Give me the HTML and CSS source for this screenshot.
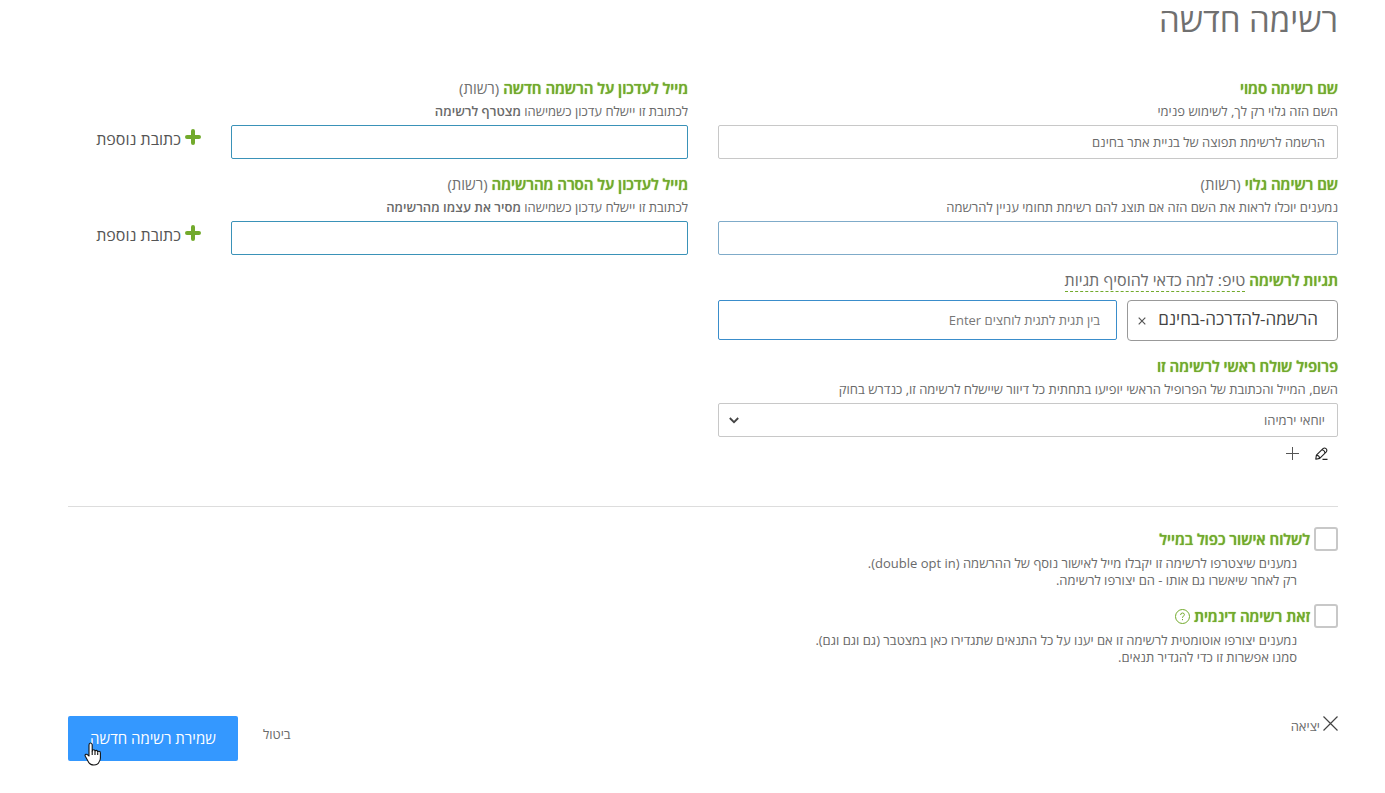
FILE: index.html
```html
<!DOCTYPE html>
<html lang="he" dir="rtl">
<head>
<meta charset="utf-8">
<title>רשימה חדשה</title>
<link rel="stylesheet" href="styles.css">
</head>
<body>
<main class="page">
  <h1 class="title">רשימה חדשה</h1>
  <form class="form">
    <div class="columns">
      <section class="column">
        <div class="field">
          <label class="label" for="hidden-name">שם רשימה סמוי</label>
          <p class="help">השם הזה גלוי רק לך, לשימוש פנימי</p>
          <input class="input" id="hidden-name" type="text" value="הרשמה לרשימת תפוצה של בניית אתר בחינם">
        </div>
        <div class="field">
          <label class="label" for="public-name">שם רשימה גלוי <span class="optional">(רשות)</span></label>
          <p class="help">נמענים יוכלו לראות את השם הזה אם תוצג להם רשימת תחומי עניין להרשמה</p>
          <input class="input input-soft" id="public-name" type="text">
        </div>
        <div class="field">
          <div class="label-row"><label class="label" for="tags">תגיות לרשימה</label> <a class="tip" href="#">טיפ: למה כדאי להוסיף תגיות</a></div>
          <div class="tags">
            <span class="tag">הרשמה-להדרכה-בחינם
              <button class="tag-remove" type="button" aria-label="הסרת תגית">
                <svg width="8" height="8" viewBox="0 0 8 8"><path d="M.7.7l6.6 6.6M7.3.7L.7 7.3" fill="none" stroke="#555" stroke-width="1.2"/></svg>
              </button>
            </span>
            <input class="input input-tag" id="tags" type="text" placeholder="בין תגית לתגית לוחצים Enter">
          </div>
        </div>
        <div class="field">
          <label class="label" for="profile">פרופיל שולח ראשי לרשימה זו</label>
          <p class="help">השם, המייל והכתובת של הפרופיל הראשי יופיעו בתחתית כל דיוור שיישלח לרשימה זו, כנדרש בחוק</p>
          <div class="select-wrap">
            <select class="input select" id="profile"><option>יוחאי ירמיהו</option></select>
            <svg class="chevron" width="10" height="7" viewBox="0 0 10 7"><path d="M.8 1L5 5.200 9.200 1" fill="none" stroke="#444" stroke-width="1.800"/></svg>
          </div>
          <div class="profile-actions">
            <button class="icon-button" type="button" aria-label="עריכת פרופיל">
              <svg width="13" height="13" viewBox="0 0 13 13" fill="none" stroke="#222" stroke-width="1.1" stroke-linejoin="round"><path d="M.8 12.200l.6-4L8 1.600Q9.500.3 11 1.600T11.300 4.800L4.700 11.400zM1.400 8.200Q4.500 8.400 4.700 11.400M7 2.800Q9.600 3.200 10 6M7.500 12.400H12.500"/></svg>
            </button>
            <button class="icon-button" type="button" aria-label="הוספת פרופיל">
              <svg width="13" height="13" viewBox="0 0 13 13"><path d="M6.5 0v13M0 6.5h13" fill="none" stroke="#555" stroke-width="1"/></svg>
            </button>
          </div>
        </div>
      </section>

      <section class="column">
        <div class="mail-row">
          <div class="field">
            <label class="label" for="mail-join">מייל לעדכון על הרשמה חדשה <span class="optional">(רשות)</span></label>
            <p class="help">לכתובת זו יישלח עדכון כשמישהו <b>מצטרף לרשימה</b></p>
            <input class="input input-active" id="mail-join" type="email">
          </div>
          <button class="add" type="button">
            <svg width="16" height="16" viewBox="0 0 16 16"><path d="M8 2v12M2 8h12" fill="none" stroke="#72aa2c" stroke-width="4" stroke-linecap="round"/></svg>
            <span>כתובת נוספת</span>
          </button>
        </div>
        <div class="mail-row">
          <div class="field">
            <label class="label" for="mail-leave">מייל לעדכון על הסרה מהרשימה <span class="optional">(רשות)</span></label>
            <p class="help">לכתובת זו יישלח עדכון כשמישהו <b>מסיר את עצמו מהרשימה</b></p>
            <input class="input input-active" id="mail-leave" type="email">
          </div>
          <button class="add" type="button">
            <svg width="16" height="16" viewBox="0 0 16 16"><path d="M8 2v12M2 8h12" fill="none" stroke="#72aa2c" stroke-width="4" stroke-linecap="round"/></svg>
            <span>כתובת נוספת</span>
          </button>
        </div>
      </section>
    </div>

    <section class="options">
      <div class="option">
        <div class="option-head">
          <input class="checkbox" id="double-opt" type="checkbox">
          <label class="label" for="double-opt">לשלוח אישור כפול במייל</label>
        </div>
        <p class="option-text">נמענים שיצטרפו לרשימה זו יקבלו מייל לאישור נוסף של ההרשמה (double opt in).<br>רק לאחר שיאשרו גם אותו - הם יצורפו לרשימה.</p>
      </div>
      <div class="option">
        <div class="option-head">
          <input class="checkbox" id="dynamic" type="checkbox">
          <label class="label" for="dynamic">זאת רשימה דינמית</label>
          <button class="icon-button hint" type="button" aria-label="עזרה">
            <svg width="15" height="15" viewBox="0 0 15 15" fill="none" stroke="#72aa2c" stroke-width="1"><circle cx="7.5" cy="7.5" r="7"/><path d="M5.6 6q0-2 1.9-2t1.9 1.700q0 1-1.100 1.500-.8.4-.8 1.600M7.5 10v1.200"/></svg>
          </button>
        </div>
        <p class="option-text">נמענים יצורפו אוטומטית לרשימה זו אם יענו על כל התנאים שתגדירו כאן במצטבר (גם וגם וגם).<br>סמנו אפשרות זו כדי להגדיר תנאים.</p>
      </div>
    </section>

    <footer class="footer">
      <a class="exit" href="#">
        <svg width="15" height="15" viewBox="0 0 15 15"><path d="M.5.5l14 14M14.5.5l-14 14" fill="none" stroke="#444" stroke-width="1.200"/></svg>
        <span>יציאה</span>
      </a>
      <div class="footer-actions">
        <a class="cancel" href="#">ביטול</a>
        <button class="save" type="submit">שמירת רשימה חדשה
          <svg class="pointer" width="18" height="24" viewBox="0 0 18 24"><path d="M5 14V3q0-2 1.600-2T8.200 3v6q.3-1.200 1.500-1.200T11 9.300q.3-.9 1.400-.9t1.300 1.500q.3-.7 1.300-.7 1.400 0 1.400 1.700v5q0 2.500-1.400 4.100-.7 3-5.200 3-3.800 0-5.200-2.800L1.300 14.300q-.7-1.500.5-2 1-.4 1.900.6z" fill="#fff" stroke="#111" stroke-width="1.100" stroke-linejoin="round"/><path d="M8.200 9v4M11 9.500V13M13.700 10.200V13" stroke="#111" stroke-width="1.100"/></svg>
        </button>
      </div>
    </footer>
  </form>
</main>
</body>
</html>
```
FILE: styles.css
```css
* { box-sizing: border-box; }

body {
  margin: 0;
  background: #fff;
  color: #6a6a6a;
  font-family: "Open Sans", "Noto Sans", sans-serif;
  font-size: 13px;
}

button, input, select { font: inherit; color: inherit; }
button { padding: 0; border: 0; background: none; cursor: pointer; }
a { color: inherit; text-decoration: none; }
p, h1 { margin: 0; }
b { font-weight: 600; }
svg { display: block; flex: none; }

.page { padding: 0 47px 32px 68px; }
.title { height: 76px; font-size: 33px; line-height: 40px; font-weight: 400; color: #707070; }

.columns { display: grid; grid-template-columns: 1fr 1fr; gap: 30px; padding-bottom: 46px; border-bottom: 1px solid #ddd; }
.field { margin-bottom: 13px; }
.column > .field:last-child { margin-bottom: 0; }
.label { display: block; font-size: 15px; line-height: 24px; font-weight: 600; color: #72aa2c; text-shadow: 0 0 1px #72aa2c; }
.optional { font-weight: 400; color: #707070; text-shadow: none; }
.help { line-height: 22px; margin-bottom: 3px; white-space: nowrap; }

.input { display: block; width: 100%; height: 34px; padding: 0 12px; border: 1px solid #c8c8c8; border-radius: 2px; background: #fff; outline: 0; }
.input-soft { border-color: #7fabc9; }
.input-active { border-color: #3a92b8; }

.label-row { display: flex; gap: 4px; margin-bottom: 8px; }
.tip { height: 24px; font-size: 16px; line-height: 24px; border-bottom: 1px dashed #72aa2c; }
.tags { display: flex; gap: 10px; }
.tag { display: flex; flex: none; align-items: center; gap: 12px; height: 41px; padding: 0 19px 4px 10px; border: 1px solid #999; border-radius: 4px; font-size: 17px; color: #444; }
.tag-remove { padding-top: 4px; }
.input-tag { flex: 1; min-width: 0; height: 40px; padding: 0 16px; border-color: #3a8dcb; }
.input-tag::placeholder { color: #777; opacity: 1; }

.select-wrap { position: relative; }
.select { appearance: none; }
.chevron { position: absolute; left: 11px; top: 14px; pointer-events: none; }
.profile-actions { display: flex; gap: 16px; padding: 10px 10px 0; }

.mail-row { display: grid; grid-template-columns: 457fr 133fr; gap: 30px; }
.add { display: flex; align-items: start; gap: 4px; align-self: end; height: 43px; font-size: 16px; line-height: 20px; color: #555; white-space: nowrap; }

.options { padding-top: 20px; }
.option { margin-bottom: 15px; }
.option-head { display: flex; align-items: center; gap: 4px; height: 24px; }
.checkbox { appearance: none; flex: none; width: 24px; height: 24px; margin: 0; border: 2px solid #c8c8c8; border-radius: 3px; }
.option-text { padding: 4px 41px 0 0; line-height: 17px; }

.footer { display: flex; justify-content: space-between; align-items: start; padding-top: 35px; }
.exit { display: flex; gap: 3px; line-height: 20px; }
.footer-actions { display: flex; gap: 25px; }
.cancel { line-height: 36px; }
.save { position: relative; width: 170px; height: 45px; padding-bottom: 2px; background: #3498ff; border-radius: 2px; color: #fff; font-size: 15px; }
.pointer { position: absolute; left: 16px; top: 26px; }
```
